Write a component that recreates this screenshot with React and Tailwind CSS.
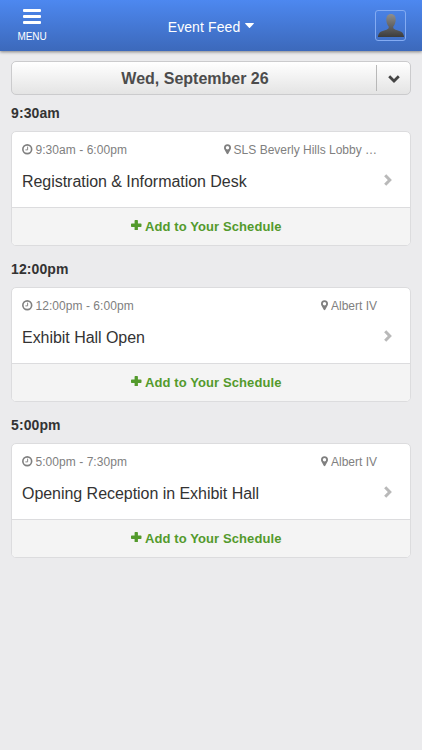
import { useState } from 'react';

const EVENTS = [
  {
    id: 1,
    start: '9:30am',
    time: '9:30am - 6:00pm',
    location: 'SLS Beverly Hills Lobby …',
    title: 'Registration & Information Desk',
  },
  {
    id: 2,
    start: '12:00pm',
    time: '12:00pm - 6:00pm',
    location: 'Albert IV',
    title: 'Exhibit Hall Open',
  },
  {
    id: 3,
    start: '5:00pm',
    time: '5:00pm - 7:30pm',
    location: 'Albert IV',
    title: 'Opening Reception in Exhibit Hall',
  },
];

function ClockIcon() {
  return (
    <svg viewBox="0 0 20 20" className="w-[10.5px] h-[10.5px] mb-[2px] shrink-0" fill="none" stroke="currentColor">
      <circle cx="10" cy="10" r="8.4" strokeWidth="3.1" />
      <path d="M10.7 5v6.200H6.500" strokeWidth="1.800" />
    </svg>
  );
}

function PinIcon() {
  return (
    <svg viewBox="0 0 14 20" className="w-[7px] h-[10.5px] mb-[2px] shrink-0" fill="currentColor">
      <path
        fillRule="evenodd"
        d="M7 0a7 7 0 0 1 7 7c0 1.200-.2 2.200-.6 3L8.500 19c-.6 1.200-2.400 1.200-3 0L.6 10C.2 9.200 0 8.200 0 7a7 7 0 0 1 7-7Zm0 3.600a3.400 3.400 0 1 0 0 6.800 3.400 3.400 0 0 0 0-6.800Z"
      />
    </svg>
  );
}

function PlusIcon() {
  return (
    <svg viewBox="0 0 22 22" className="w-[10.5px] h-[10.5px] mb-[3px] shrink-0" fill="currentColor">
      <path d="M9 0h4q1.500 0 1.500 1.500v6h6Q22 7.500 22 9v4q0 1.500-1.500 1.500h-6v6Q14.500 22 13 22H9q-1.500 0-1.500-1.500v-6h-6Q0 14.500 0 13V9q0-1.500 1.500-1.500h6v-6Q7.500 0 9 0Z" />
    </svg>
  );
}

function ChevronIcon() {
  return (
    <svg viewBox="0 0 8 12" className="w-[8px] h-[12px]" fill="none" stroke="currentColor" strokeWidth="3">
      <path d="M1.200 1.300 5.800 6 1.200 10.700" />
    </svg>
  );
}

function AvatarIcon() {
  return (
    <svg viewBox="0 0 28 28" className="w-[28px] h-[28px]">
      <defs>
        <linearGradient id="silhouette" x1="0" y1="0" x2="0" y2="1">
          <stop offset="0" stopColor="#8e8e8e" />
          <stop offset="1" stopColor="#3c3c3c" />
        </linearGradient>
      </defs>
      <path
        fill="url(#silhouette)"
        d="M14 2c3.200 0 4.800 2.400 4.700 5.800 0 2.700-1 5.200-2.400 6.800-.3 1.700.3 2.400 2.200 3.100 4.300 1.300 8 1.600 8.600 7.300H.9c.6-5.700 4.300-6 8.600-7.300 1.900-.7 2.500-1.400 2.200-3.100-1.400-1.600-2.400-4.100-2.400-6.800C9.200 4.400 10.800 2 14 2Z"
      />
    </svg>
  );
}

function Header() {
  return (
    <header className="h-[51px] grid grid-cols-[64px_1fr_64px] bg-gradient-to-b from-[#4d88f0] to-[#3c69bb] text-white shadow-[0_1px_3px_rgba(0,0,0,0.45)]">
      <button className="flex flex-col items-center pt-[9px]">
        <span className="flex flex-col gap-[3px]">
          <span className="w-[18px] h-[3px] rounded-[1px] bg-white" />
          <span className="w-[18px] h-[3px] rounded-[1px] bg-white" />
          <span className="w-[18px] h-[3px] rounded-[1px] bg-white" />
        </span>
        <span className="mt-[7px] text-[10px] leading-[12px] tracking-[-0.1px]">MENU</span>
      </button>
      <button className="flex items-center justify-center gap-[5px] pt-[3px] text-[14px] tracking-[0.1px]">
        Event Feed
        <svg viewBox="0 0 9 5" className="w-[9px] h-[5px] mb-[3px]" fill="currentColor">
          <path d="M.5 0h8q.7.200.2.800L5 4.700q-.5.400-1 0L.3.800Q-.2.200.5 0Z" />
        </svg>
      </button>
      <div className="flex pt-[10px] pl-[17px]">
        <div className="w-[31px] h-[31px] flex items-center justify-center rounded-[3px] border border-[#84abf2]">
          <AvatarIcon />
        </div>
      </div>
    </header>
  );
}

function DatePicker() {
  return (
    <button className="w-full h-[34px] flex items-center rounded-[5px] border border-[#cbcbcd] bg-gradient-to-b from-white to-[#e4e4e4]">
      <span className="flex-1 pl-[2px] pt-[1px] text-center text-[16px] font-bold text-[#4c4c4c]">
        Wed, September 26
      </span>
      <span className="w-[34px] h-[26px] pt-[2px] flex items-center justify-center border-l border-[#b8b8b8] text-[#444]">
        <svg viewBox="0 0 12 8" className="w-[12px] h-[8px]" fill="none" stroke="currentColor" strokeWidth="2.800">
          <path d="M1.200 1.300 6 6l4.800-4.700" />
        </svg>
      </span>
    </button>
  );
}

function EventCard({ event, added, onToggle }) {
  return (
    <section>
      <h2 className="h-[36px] pt-[9px] text-[14px] leading-[19px] tracking-[0.1px] font-bold text-[#333]">
        {event.start}
      </h2>
      <article className="h-[115px] mb-[5px] rounded-[5px] border border-[#dcdcde] bg-white overflow-hidden">
        <div className="h-[75px] pl-[10px] pr-[18px] pt-[11px]">
          <div className="flex items-center justify-between pr-[15px] text-[12px] leading-[15px] text-[#808080]">
            <span className="flex items-center gap-[3px] tracking-[0.05px]">
              <ClockIcon />
              {event.time}
            </span>
            <span className="flex items-center gap-[3px]">
              <PinIcon />
              {event.location}
            </span>
          </div>
          <div className="mt-[14px] flex justify-between text-[16px] leading-[20px] text-[#333]">
            <h3 className="tracking-[-0.04px]">{event.title}</h3>
            <span className="pt-[2px] text-[#b9b9b9]">
              <ChevronIcon />
            </span>
          </div>
        </div>
        <button
          onClick={onToggle}
          aria-pressed={added}
          className="w-full h-[38px] pr-[9px] flex items-center justify-center gap-[3px] border-t border-[#dcdcde] bg-[#f4f4f4] text-[13px] tracking-[0.1px] font-bold text-[#539a2c]"
        >
          <PlusIcon />
          Add to Your Schedule
        </button>
      </article>
    </section>
  );
}

export default function App() {
  const [scheduled, setScheduled] = useState(new Set());

  const toggle = (id) => {
    setScheduled((prev) => {
      const next = new Set(prev);
      if (next.has(id)) next.delete(id);
      else next.add(id);
      return next;
    });
  };

  return (
    <div className="min-h-screen bg-[#ebebed] font-['Liberation_Sans',Arial,sans-serif]">
      <Header />
      <main className="px-[11px] pt-[10px]">
        <DatePicker />
        {EVENTS.map((event) => (
          <EventCard
            key={event.id}
            event={event}
            added={scheduled.has(event.id)}
            onToggle={() => toggle(event.id)}
          />
        ))}
      </main>
    </div>
  );
}
